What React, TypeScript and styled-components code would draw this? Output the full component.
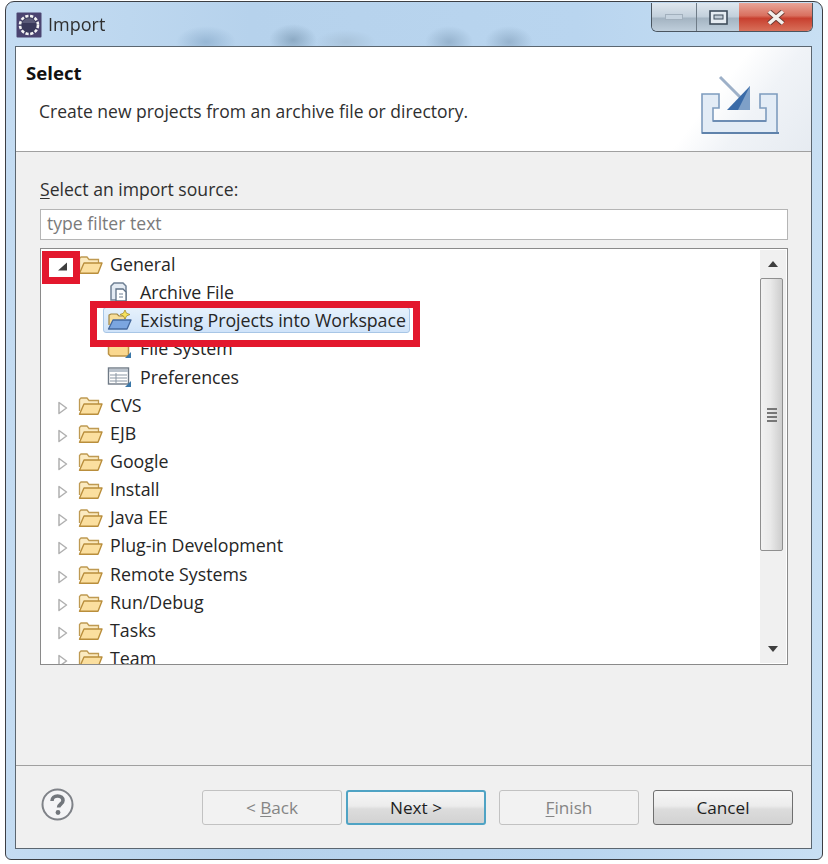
import React from "react";
import styled, { createGlobalStyle } from "styled-components";

const Global = createGlobalStyle`
  html, body { margin: 0; padding: 0; background: #fff; }
  body { font-family: "Open Sans", "Noto Sans", sans-serif; }
`;

const Page = styled.div`
  width: 828px;
  height: 864px;
  padding: 1px 0 0 5px;
  box-sizing: border-box;
  overflow: hidden;
  filter: blur(0.45px);
`;

const Win = styled.div`
  width: 818px;
  height: 859px;
  box-sizing: border-box;
  border: 1.5px solid #3c3f44;
  border-radius: 9px 9px 6px 6px;
  padding: 0 10px 10px 9px;
  display: flex;
  flex-direction: column;
  background:
    radial-gradient(ellipse 30px 16px at 200px 40px, rgba(143,176,207,0.8) 0%, rgba(143,176,207,0) 100%),
    radial-gradient(ellipse 24px 16px at 287px 38px, rgba(130,160,186,0.8) 0%, rgba(138,168,194,0) 100%),
    radial-gradient(ellipse 30px 12px at 340px 40px, rgba(165,191,214,0.8) 0%, rgba(165,191,214,0) 100%),
    radial-gradient(ellipse 24px 16px at 443px 40px, rgba(142,171,198,0.8) 0%, rgba(142,171,198,0) 100%),
    radial-gradient(ellipse 24px 16px at 503px 40px, rgba(142,171,198,0.8) 0%, rgba(142,171,198,0) 100%),
    linear-gradient(90deg, #c4dcf2 0%, #b6d2ec 30%, #b9d5ef 70%, #c8dff3 100%);
`;

const TitleBar = styled.div`
  height: 44px;
  flex: none;
  display: flex;
  align-items: flex-start;
`;

const AppIcon = styled.svg`
  width: 26px;
  height: 26px;
  margin: 10px 6px 0 1px;
  flex: none;
`;

const TitleText = styled.span`
  margin-top: 9px;
  font-size: 18px;
  line-height: 26px;
  color: #2f2f2f;
`;

const CaptionGroup = styled.div`
  margin-left: auto;
  margin-right: -1px;
  margin-top: 1px;
  display: flex;
  height: 28px;
  border: 1px solid #4a5560;
  border-top: 0;
  border-radius: 0 0 6px 6px;
  overflow: hidden;
`;

const CaptionButton = styled.div<{ $w: number; $close?: boolean }>`
  width: ${(p) => p.$w}px;
  display: flex;
  align-items: center;
  justify-content: center;
  border-left: ${(p) => (p.$close ? "0" : "1px solid #6f7c88")};
  &:first-child { border-left: 0; }
  background: ${(p) =>
    p.$close
      ? "linear-gradient(180deg, #e8a598 0%, #d9705f 45%, #c8402f 55%, #d8705a 100%)"
      : "linear-gradient(180deg, #dfe7ee 0%, #c3d0dc 48%, #a4b4c2 55%, #bfcedb 100%)"};
`;

const Client = styled.div`
  flex: 1;
  min-height: 0;
  display: flex;
  flex-direction: column;
  border: 1px solid #5b6670;
  background: #f0f0f0;
`;

const Header = styled.div`
  height: 105px;
  flex: none;
  box-sizing: border-box;
  border-bottom: 1.5px solid #a0a0a0;
  background: linear-gradient(128deg, #fff 0%, #fff 84%, #f0f3f7 90%, #e6ebf1 100%);
  padding: 13px 0 0 10px;
  display: flex;
`;

const HeaderText = styled.div`
  flex: 1;
`;

const HeaderTitle = styled.div`
  font-weight: 700;
  font-size: 18.6px;
  line-height: 26px;
  color: #111;
`;

const HeaderDesc = styled.div`
  margin: 12px 0 0 13px;
  font-size: 17.5px;
  line-height: 26px;
  color: #2f2f2f;
`;

const WizardIcon = styled.svg`
  width: 80px;
  height: 62px;
  margin: 15px 31px 0 0;
  flex: none;
`;

const Body = styled.div`
  flex: 1;
  min-height: 0;
  padding: 25px 23px 0 24px;
  display: flex;
  flex-direction: column;
`;

const FieldLabel = styled.div`
  font-size: 17.6px;
  line-height: 24px;
  color: #2f2f2f;
  height: 32px;
`;

const Mnemonic = styled.span`
  text-decoration: underline;
  text-underline-offset: 2px;
  text-decoration-thickness: 1px;
`;

const FilterInput = styled.div`
  height: 31px;
  box-sizing: border-box;
  border: 1.5px solid #b5b5b5;
  background: #fff;
  padding-left: 6px;
  font-size: 17.6px;
  line-height: 27px;
  color: #7b7b7b;
  flex: none;
`;

const TreeBox = styled.div`
  margin-top: 8px;
  height: 417px;
  flex: none;
  box-sizing: border-box;
  border: 1.5px solid #8a8a8a;
  background: #fff;
  display: flex;
  position: relative;
`;

const TreeRows = styled.div`
  flex: 1;
  min-width: 0;
  overflow: hidden;
  padding-top: 1px;
`;

const Row = styled.div<{ $child?: boolean }>`
  height: 28.15px;
  display: flex;
  align-items: center;
  padding-left: ${(p) => (p.$child ? 66 : 16)}px;
  font-size: 17.8px;
  color: #262626;
  white-space: nowrap;
`;

const Twisty = styled.svg`
  width: 12px;
  height: 14px;
  margin-top: 6px;
  flex: none;
`;

const FolderSvg = styled.svg`
  width: 25px;
  height: 20px;
  margin: 2px 7px 0 9px;
  flex: none;
`;

const ChildIcon = styled.svg`
  width: 25px;
  height: 22px;
  margin-right: 8px;
  flex: none;
`;

const Selected = styled.span`
  display: block;
  margin-left: -4px;
  padding-left: 36px;
  padding-right: 3px;
  line-height: 24px;
  letter-spacing: -0.06px;
  border: 1px solid #a8c6e6;
  border-radius: 3px;
  background: linear-gradient(180deg, #e6f1fc 0%, #cfe3f9 100%);
  position: relative;
`;

const SelectedIcon = styled.svg`
  position: absolute;
  left: 3px;
  top: 1px;
  width: 25px;
  height: 22px;
`;

const Scrollbar = styled.div`
  width: 26px;
  margin: 1px 1px 1px 0;
  flex: none;
  display: flex;
  flex-direction: column;
  background: #f0f0f0;
`;

const ScrollArrow = styled.div`
  height: 28px;
  flex: none;
  display: flex;
  align-items: center;
  justify-content: center;
`;

const Thumb = styled.div`
  height: 273px;
  width: 23px;
  box-sizing: border-box;
  flex: none;
  border: 1px solid #8f8f8f;
  border-radius: 2px;
  background: linear-gradient(90deg, #f2f2f2 0%, #e9e9e9 45%, #cdcdcd 100%);
  display: flex;
  flex-direction: column;
  align-items: center;
  justify-content: center;
  gap: 2px;
`;

const GripLine = styled.div`
  width: 10px;
  height: 2px;
  background: #777;
`;

const TrackRest = styled.div`
  flex: 1;
`;

const Footer = styled.div`
  height: 83px;
  flex: none;
  box-sizing: border-box;
  border-top: 1.5px solid #a0a0a0;
  padding: 24px 18px 0 25px;
  display: flex;
  align-items: flex-start;
`;

const HelpIcon = styled.svg`
  width: 33px;
  height: 33px;
  flex: none;
  margin-top: -2px;
`;

const ButtonGroup = styled.div`
  margin-left: auto;
  display: flex;
`;

const WizardButton = styled.div<{ $disabled?: boolean; $default?: boolean; $gap?: number }>`
  width: 140px;
  height: 35px;
  box-sizing: border-box;
  margin-left: ${(p) => p.$gap ?? 0}px;
  border-radius: 3px;
  display: flex;
  align-items: center;
  justify-content: center;
  font-size: 17.2px;
  color: ${(p) => (p.$disabled ? "#858585" : "#1e1e1e")};
  border: ${(p) =>
    p.$disabled ? "1.5px solid #c2c2c2" : p.$default ? "2px solid #4fa3c4" : "1.5px solid #6f6f6f"};
  background: ${(p) =>
    p.$disabled ? "#f2f2f2" : "linear-gradient(180deg, #f6f6f6 0%, #ececec 45%, #dcdcdc 55%, #d2d2d2 100%)"};
`;

const Callout = styled.div<{ $x: number; $y: number; $w: number; $h: number }>`
  position: absolute;
  left: ${(p) => p.$x}px;
  top: ${(p) => p.$y}px;
  width: ${(p) => p.$w}px;
  height: ${(p) => p.$h}px;
  box-sizing: border-box;
  border: 7px solid #e3182d;
`;

const FolderIcon = () => (
  <FolderSvg viewBox="0 0 25 20">
    <path d="M1.5 15V3.5L3 2h6l2 2.5h9.5V8" fill="#fbeac0" stroke="#bf9a52" strokeWidth="1.3" />
    <path d="M1.5 18.2L6 8h18l-4 10.2z" fill="#fbdf9f" stroke="#b98e3c" strokeWidth="1.4" strokeLinejoin="round" />
  </FolderSvg>
);

const ClosedTwisty = () => (
  <Twisty viewBox="0 0 12 14">
    <path d="M2 1.5l7.5 5.5L2 12.5z" fill="#fff" stroke="#b0b0b0" strokeWidth="1.5" strokeLinejoin="round" />
  </Twisty>
);

const folders = ["CVS", "EJB", "Google", "Install", "Java EE", "Plug-in Development", "Remote Systems", "Run/Debug", "Tasks", "Team"];

export default function App() {
  return (
    <>
      <Global />
      <Page>
        <Win>
          <TitleBar>
            <AppIcon viewBox="0 0 26 26">
              <rect x="0.5" y="0.5" width="25" height="25" rx="1" fill="#4b4470" />
              <circle cx="13" cy="13" r="9" fill="#39395a" stroke="#f4f4f4" strokeWidth="2.6" strokeDasharray="3.2 1.6" />
              <path d="M6 11a7.5 7.5 0 0 1 14 0z" fill="#5a5a78" />
            </AppIcon>
            <TitleText>Import</TitleText>
            <CaptionGroup>
              <CaptionButton $w={44}>
                <svg width="18" height="7" viewBox="0 0 18 7"><rect x="0.5" y="0.5" width="17" height="5" fill="#c6d3df" stroke="#a2b0bd" /></svg>
              </CaptionButton>
              <CaptionButton $w={42}>
                <svg width="19" height="15" viewBox="0 0 19 15"><rect x="1" y="1" width="17" height="13" fill="#e6ecf2" stroke="#3f4d5b" strokeWidth="1.6" /><rect x="5" y="5" width="9" height="4" fill="#c2ccd6" stroke="#3f4d5b" /></svg>
              </CaptionButton>
              <CaptionButton $w={73} $close>
                <svg width="20" height="15" viewBox="0 0 20 15"><path d="M3 1.5l14 12M17 1.5l-14 12" stroke="#6d3b34" strokeWidth="5.4" /><path d="M3 1.5l14 12M17 1.5l-14 12" stroke="#f2efec" strokeWidth="3.6" /></svg>
              </CaptionButton>
            </CaptionGroup>
          </TitleBar>
          <Client>
            <Header>
              <HeaderText>
                <HeaderTitle>Select</HeaderTitle>
                <HeaderDesc>Create new projects from an archive file or directory.</HeaderDesc>
              </HeaderText>
              <WizardIcon viewBox="0 0 80 62">
                <path d="M20 2l24 24" stroke="#9db0c8" strokeWidth="3" />
                <path d="M50 11v24H27z" fill="#3a6ba8" />
                <path d="M50 11v24H38z" fill="#7ea0c8" />
                <path d="M2 19h17v14h-6v13h53V33h-6V19h17v39H2z" fill="#e3ecf6" stroke="#7e9cbe" strokeWidth="1.6" />
                <path d="M13 46h53" stroke="#6d8db4" strokeWidth="1.8" />
                <path d="M2 58h77" stroke="#5f82ab" strokeWidth="2.2" />
              </WizardIcon>
            </Header>
            <Body>
              <FieldLabel><Mnemonic>S</Mnemonic>elect an import source:</FieldLabel>
              <FilterInput>type filter text</FilterInput>
              <TreeBox>
                <TreeRows>
                  <Row>
                    <Twisty viewBox="0 0 12 14">
                      <path d="M1 10.5h9V2.5z" fill="#3e3e3e" />
                    </Twisty>
                    <FolderIcon />
                    General
                  </Row>
                  <Row $child>
                    <ChildIcon viewBox="0 0 25 22">
                      <path d="M4 19V5l3-3h9l3 3v14z" fill="#e4ebf3" stroke="#6f8094" strokeWidth="1.5" />
                      <path d="M9 8h7l3 3v9H9z" fill="#fff" stroke="#5f7186" strokeWidth="1.3" />
                      <path d="M12 13h4M12 16h4" stroke="#6f8094" />
                    </ChildIcon>
                    Archive File
                  </Row>
                  <Row $child>
                    <Selected>
                      <SelectedIcon viewBox="0 0 25 22">
                        <path d="M2 16V6l2-1h6l2 2h6v3" fill="#f7dd9a" stroke="#a08543" strokeWidth="1.2" />
                        <path d="M1.5 20L6 11h18l-4 9z" fill="#7ba6e0" stroke="#44699e" strokeWidth="1.3" strokeLinejoin="round" />
                        <path d="M18 1l1.4 3.2L23 5.5l-3.4 1.4L18 10l-1.6-3.1L13 5.5l3.4-1.3z" fill="#f6e25a" stroke="#a68d2c" strokeWidth="0.8" />
                      </SelectedIcon>
                      Existing Projects into Workspace
                    </Selected>
                  </Row>
                  <Row $child>
                    <ChildIcon viewBox="0 0 25 22">
                      <path d="M1.5 4v13l2 2h18V4z" fill="#fad88f" stroke="#bc9346" strokeWidth="1.5" />
                      <path d="M24 15v6h-6z" fill="#3a77a8" />
                    </ChildIcon>
                    File System
                  </Row>
                  <Row $child>
                    <ChildIcon viewBox="0 0 25 22">
                      <rect x="1.5" y="2" width="20" height="16" fill="#fff" stroke="#6f7a86" strokeWidth="1.4" />
                      <path d="M2 3h19v3H2z" fill="#b9c2cc" />
                      <path d="M3 9h17M3 12h17M3 15h17M9 7v10" stroke="#8b97a4" />
                      <path d="M24 15v6h-6z" fill="#3a77a8" />
                    </ChildIcon>
                    Preferences
                  </Row>
                  {folders.map((f) => (
                    <Row key={f}>
                      <ClosedTwisty />
                      <FolderIcon />
                      {f}
                    </Row>
                  ))}
                </TreeRows>
                <Scrollbar>
                  <ScrollArrow>
                    <svg width="12" height="8" viewBox="0 0 12 8"><path d="M6 1l5 6H1z" fill="#3f3f3f" /></svg>
                  </ScrollArrow>
                  <Thumb>
                    <GripLine />
                    <GripLine />
                    <GripLine />
                    <GripLine />
                  </Thumb>
                  <TrackRest />
                  <ScrollArrow>
                    <svg width="12" height="8" viewBox="0 0 12 8"><path d="M6 7L1 1h10z" fill="#3f3f3f" /></svg>
                  </ScrollArrow>
                </Scrollbar>
                <Callout $x={1} $y={2} $w={38} $h={33} />
                <Callout $x={49} $y={52} $w={330} $h={46} />
              </TreeBox>
            </Body>
            <Footer>
              <HelpIcon viewBox="0 0 33 33">
                <circle cx="16.5" cy="16.5" r="15" fill="#f4f4f6" stroke="#7f8288" strokeWidth="2" />
                <path d="M11 13c0-3.2 2.4-5 5.6-5 3.2 0 5.4 1.8 5.4 4.4 0 3.6-4.4 3.6-4.4 7.2" fill="none" stroke="#72767c" strokeWidth="3.6" />
                <circle cx="17" cy="24.5" r="2.4" fill="#72767c" />
              </HelpIcon>
              <ButtonGroup>
                <WizardButton $disabled>&lt;&nbsp;<Mnemonic>B</Mnemonic>ack</WizardButton>
                <WizardButton $default $gap={4}>Next &gt;</WizardButton>
                <WizardButton $disabled $gap={13}><Mnemonic>F</Mnemonic>inish</WizardButton>
                <WizardButton $gap={14}>Cancel</WizardButton>
              </ButtonGroup>
            </Footer>
          </Client>
        </Win>
      </Page>
    </>
  );
}
